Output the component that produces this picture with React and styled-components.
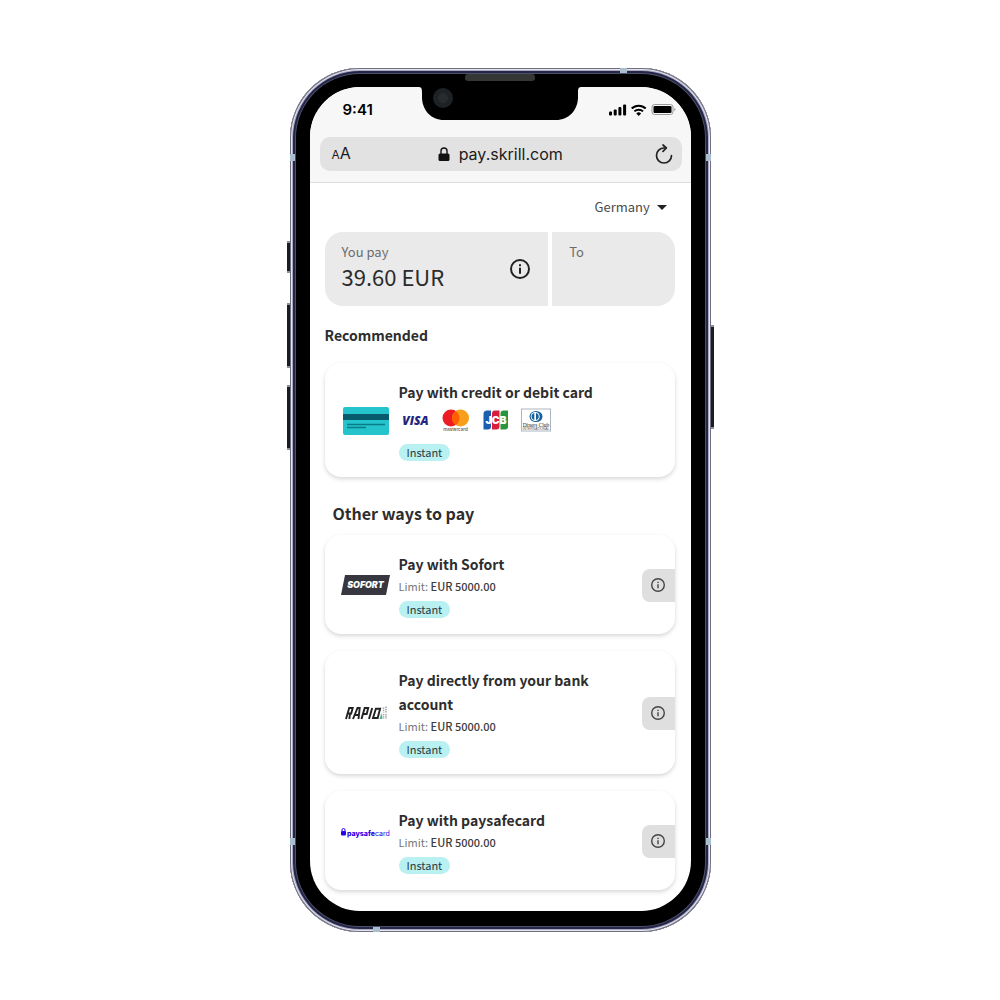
import React from "react";
import styled, { createGlobalStyle } from "styled-components";

const GlobalStyle = createGlobalStyle`
  *, *::before, *::after { box-sizing: border-box; }
  body {
    margin: 0;
    background: #fff;
    color: #2d2d2d;
    font-family: "Noto Sans CJK SC", "Open Sans", sans-serif;
  }
  button, input, select { font: inherit; color: inherit; margin: 0; }
  h1, h2, h3, p { margin: 0; }
`;

const Page = styled.main`
  min-height: 100vh;
  display: flex;
  justify-content: center;
  align-items: center;
`;

const Phone = styled.div`
  position: relative;
  width: 100%;
  max-width: 421px;
  padding: 19px 20px 21px;
  border-radius: 70px;
  background: #000;
  box-shadow:
    inset 0 0 0 1px #6f6f80,
    inset 0 0 0 2px #e4e4ee,
    inset 0 0 0 3px #a9a9bf,
    inset 0 0 0 5px #26264a,
    inset 0 0 0 6px #4b5068;
`;

const SideButton = styled.span`
  position: absolute;
  top: ${(p) => p.$top}px;
  ${(p) => p.$side}: -3px;
  width: 3px;
  height: ${(p) => p.$length}px;
  border: solid #8f8f9c;
  border-width: 2px 0;
  background: #1c1a26;
`;

const Antenna = styled.span`
  position: absolute;
  background: #a9bfd0;
  ${(p) => p.$edge}: 0;
  ${(p) => p.$from}: ${(p) => p.$offset}px;
  width: ${(p) => (p.$edge === "top" || p.$edge === "bottom" ? 7 : 5)}px;
  height: ${(p) => (p.$edge === "top" || p.$edge === "bottom" ? 5 : 7)}px;
`;

const Notch = styled.svg`
  position: absolute;
  top: 4px;
  left: 50%;
  width: 170px;
  height: 48px;
  margin-left: -85px;
`;

const Screen = styled.div`
  border-radius: 50px;
  overflow: hidden;
  background: #fff;
`;

const BrowserBar = styled.header`
  display: flex;
  flex-direction: column;
  gap: 15px;
  padding: 11px 9px 11px 10px;
  background: #f7f7f7;
  border-bottom: 1px solid #dedede;
`;

const StatusBar = styled.div`
  display: flex;
  justify-content: space-between;
  align-items: center;
  height: 24px;
  padding: 0 6px 0 23px;
  font: 600 15px/24px Inter, sans-serif;
  color: #000;
`;

const StatusIcons = styled.svg`
  width: 67px;
  height: 14px;
`;

const AddressBar = styled.div`
  display: flex;
  justify-content: space-between;
  align-items: center;
  height: 34px;
  padding: 0 8px 0 12px;
  border-radius: 10px;
  background: #e2e2e2;
  font-family: Inter, sans-serif;
  color: #1b1b1b;
`;

const BarButton = styled.button`
  display: flex;
  align-items: baseline;
  padding: 0;
  border: 0;
  background: none;
  font-size: 16px;
  line-height: 24px;
  small { font-size: 12px; }
`;

const Address = styled.label`
  display: flex;
  align-items: center;
  gap: 9px;
`;

const AddressInput = styled.input`
  width: 110px;
  padding: 0;
  border: 0;
  background: none;
  font-size: 16px;
  line-height: 24px;
`;

const Content = styled.div`
  padding: 12px 16px 21px 15px;
`;

const CountryRow = styled.div`
  display: flex;
  justify-content: flex-end;
  align-items: center;
  height: 24px;
  padding-right: 8px;
`;

const CountryField = styled.label`
  display: flex;
  align-items: center;
  gap: 6px;
`;

const CountrySelect = styled.select`
  appearance: none;
  padding: 0;
  border: 0;
  background: none;
  color: #4a4a4a;
  font-size: 13px;
  line-height: 20px;
`;

const Amounts = styled.div`
  display: grid;
  grid-template-columns: 223fr 122fr;
  gap: 4px;
  margin-top: 13px;
  border-radius: 18px;
  overflow: hidden;
`;

const AmountBox = styled.section`
  display: flex;
  justify-content: space-between;
  align-items: center;
  min-height: 74px;
  padding: 10px 18px 10px 17px;
  background: #eaeaea;
`;

const AmountText = styled.div`
  align-self: flex-start;
`;

const AmountLabel = styled.p`
  color: #6c6c6c;
  font-size: 13px;
  line-height: 20px;
`;

const AmountValue = styled.p`
  font-size: 22px;
  line-height: 28px;
  color: #2b2b2b;
`;

const IconButton = styled.button`
  display: flex;
  padding: 0;
  border: 0;
  background: none;
  color: #222;
`;

const SectionTitle = styled.h2`
  margin-top: ${(p) => p.$before}px;
  padding-left: ${(p) => p.$indent || 0}px;
  font-size: ${(p) => p.$size}px;
  line-height: 24px;
  font-weight: 700;
`;

const CardList = styled.div`
  display: flex;
  flex-direction: column;
  gap: 17px;
  margin-top: ${(p) => p.$before}px;
`;

const Card = styled.article`
  display: flex;
  align-items: center;
  gap: 8px;
  padding: 17px 0 16px 16px;
  border-radius: 16px;
  overflow: hidden;
  background: #fff;
  box-shadow: 0 2px 4px rgba(0, 0, 0, 0.16);
`;

const MethodLogo = styled.svg`
  flex: none;
  width: 50px;
  height: 30px;
`;

const CardBody = styled.div`
  flex: 1;
  min-width: 0;
`;

const CardTitle = styled.h3`
  font-size: 14px;
  line-height: 24px;
  font-weight: 700;
  a { color: inherit; text-decoration: none; }
`;

const Brands = styled.div`
  display: flex;
  gap: 8px;
  height: 24px;
  margin-top: 4px;
  svg { width: 32px; height: 24px; }
`;

const Limit = styled.p`
  color: #777;
  font-size: 11px;
  line-height: 20px;
  strong { color: #3c3c3c; font-weight: 500; }
`;

const Badge = styled.span`
  display: block;
  width: fit-content;
  margin-top: ${(p) => p.$before}px;
  padding: 0 8px;
  border-radius: 9px;
  background: #b9f0f2;
  font-size: 11px;
  line-height: 17px;
  color: #2a3a3c;
`;

const InfoTab = styled.button`
  flex: none;
  display: flex;
  align-items: center;
  justify-content: center;
  width: 33px;
  height: 33px;
  padding: 0;
  border: 0;
  border-radius: 8px 0 0 8px;
  background: #dfdfdf;
  color: #444;
`;

function InfoIcon({ size }) {
  return (
    <svg width={size} height={size} viewBox="0 0 20 20" fill="none" stroke="currentColor" strokeWidth="2" aria-hidden="true">
      <circle cx="10" cy="10" r="9" />
      <path d="M10 8.8v6" />
      <path d="M10 5.2v2" />
    </svg>
  );
}

function CardLogo() {
  return (
    <MethodLogo viewBox="0 0 50 30">
      <rect x="2" y="1" width="46" height="28" rx="2" fill="#25c3cb" />
      <path d="M2 8h46v6H2z" fill="#07596c" />
      <path d="M6 18.500h38M6 21.500h19" stroke="#087c89" strokeWidth="1.600" />
    </MethodLogo>
  );
}

function SofortLogo() {
  return (
    <MethodLogo viewBox="0 0 50 30">
      <path d="M4 5h45l-4 20H0z" fill="#37383f" />
      <text x="24.500" y="18.200" textAnchor="middle" fontFamily="Inter, sans-serif" fontWeight="900" fontStyle="italic" fontSize="8.800" fill="#fff">SOFORT</text>
    </MethodLogo>
  );
}

function RapidLogo() {
  return (
    <MethodLogo viewBox="0 0 50 30">
      <g fill="none" stroke="#222" strokeWidth="1.900">
        <path d="M5 21l3.200-11h3.500l-1.500 5.500H6.700M9 15.500l-.6 5.500" />
        <path d="M12 21l4.500-11h2.200L17.500 21M14 17h4" />
        <path d="M20.500 21l3.200-11h3.500l-1.500 6h-3.400" />
        <path d="M28 21l3.200-11" />
        <path d="M32 20l2.900-9.200h4.200L36.700 20z" />
      </g>
      <path d="M38.500 21l2-6 1 6z" fill="#4cb68a" />
      <path d="M42.500 9.500v5M45 8.500v6M42.500 16v5M45 16v5" stroke="#a5aca9" strokeWidth="1.600" strokeDasharray="1.500 .7" />
    </MethodLogo>
  );
}

function PaysafeLogo() {
  return (
    <MethodLogo viewBox="0 0 50 30">
      <rect x="0" y="5" width="5" height="4.500" rx="1" fill="#2a00e8" />
      <path d="M1 5V4a1.500 1.500 0 0 1 3 0v1" fill="none" stroke="#2a00e8" />
      <text x="6" y="9.800" fontFamily="Inter, sans-serif" fontSize="7" fill="#2a00e8">
        <tspan fontWeight="800">paysafe</tspan>
        <tspan fontWeight="400">card</tspan>
      </text>
    </MethodLogo>
  );
}

function BrandLogos() {
  return (
    <Brands>
      <svg viewBox="0 0 32 24" role="img" aria-label="Visa">
        <text x="16.500" y="16.500" textAnchor="middle" fontFamily="Open Sans, sans-serif" fontWeight="800" fontStyle="italic" fontSize="12" fill="#24257e">VISA</text>
      </svg>
      <svg viewBox="0 0 32 24" role="img" aria-label="Mastercard">
        <circle cx="12" cy="10" r="8.500" fill="#eb1c24" />
        <circle cx="21.500" cy="10" r="8.500" fill="#f79e1b" />
        <path d="M16.750 2.950a8.500 8.500 0 0 1 0 14.100a8.500 8.500 0 0 1 0-14.100" fill="#ff5f00" />
        <text x="16.500" y="22.500" textAnchor="middle" fontFamily="Inter, sans-serif" fontWeight="500" fontSize="4.500" fill="#555">mastercard</text>
      </svg>
      <svg viewBox="0 0 32 24" role="img" aria-label="JCB">
        <path d="M8 2.500h4v16a3 3 0 0 1-3 3H4.500V6A3.500 3.500 0 0 1 8 2.500z" fill="#1b5fae" />
        <path d="M16 2.500h4.500v16a3 3 0 0 1-3 3H13V5.500a3 3 0 0 1 3-3z" fill="#d91e3d" />
        <path d="M24.500 2.500H29v16a3 3 0 0 1-3 3h-4.500V5.500a3 3 0 0 1 3-3z" fill="#27963c" />
        <text x="17" y="15.800" textAnchor="middle" fontFamily="Inter, sans-serif" fontWeight="900" fontSize="10.500" fill="#fff">JCB</text>
      </svg>
      <svg viewBox="0 0 32 24" role="img" aria-label="Diners Club International">
        <rect x="2.500" y="1" width="29" height="22" fill="#fff" stroke="#aab6c2" />
        <ellipse cx="17" cy="8.500" rx="6.500" ry="5.500" fill="#17609c" />
        <circle cx="16.200" cy="8.500" r="4.500" fill="#fff" />
        <path d="M15.300 5a3.600 3.600 0 0 0 0 7zM17 5a3.600 3.600 0 0 1 0 7z" fill="#17609c" />
        <text x="17" y="18.800" textAnchor="middle" fontFamily="Liberation Serif, serif" fontSize="5.500" fill="#222">Diners Club</text>
        <text x="17" y="22" textAnchor="middle" fontFamily="Liberation Sans, sans-serif" fontSize="3.400" fill="#555">INTERNATIONAL</text>
      </svg>
    </Brands>
  );
}

const METHODS = [
  { title: "Pay with Sofort", Logo: SofortLogo },
  { title: "Pay directly from your bank account", Logo: RapidLogo },
  { title: "Pay with paysafecard", Logo: PaysafeLogo },
];

function MethodCard({ title, Logo }) {
  return (
    <Card>
      <Logo />
      <CardBody>
        <CardTitle><a href="#pay">{title}</a></CardTitle>
        <Limit>Limit: <strong>EUR 5000.00</strong></Limit>
        <Badge $before={5}>Instant</Badge>
      </CardBody>
      <InfoTab type="button" aria-label={title + " details"}><InfoIcon size={14} /></InfoTab>
    </Card>
  );
}

export default function App() {
  return (
    <Page>
      <GlobalStyle />
      <Phone>
        <SideButton $side="left" $top={173} $length={32} />
        <SideButton $side="left" $top={235} $length={65} />
        <SideButton $side="left" $top={317} $length={65} />
        <SideButton $side="right" $top={257} $length={104} />
        <Antenna $edge="top" $from="right" $offset={84} />
        <Antenna $edge="bottom" $from="left" $offset={83} />
        <Antenna $edge="left" $from="top" $offset={86} />
        <Antenna $edge="right" $from="top" $offset={86} />
        <Antenna $edge="left" $from="bottom" $offset={87} />
        <Antenna $edge="right" $from="bottom" $offset={87} />
        <Screen>
          <BrowserBar>
            <StatusBar>
              <time>9:41</time>
              <StatusIcons viewBox="0 0 67 14" aria-label="Signal, Wi-Fi and battery">
                <rect x="0" y="8.500" width="3" height="4" rx="1" />
                <rect x="4.700" y="6.500" width="3" height="6" rx="1" />
                <rect x="9.400" y="4" width="3" height="8.500" rx="1" />
                <rect x="14.100" y="1.500" width="3" height="11" rx="1" />
                <g fill="none" stroke="#000" strokeWidth="2">
                  <path d="M22.700 5.500a10 10 0 0 1 14 0" />
                  <path d="M25.400 8.400a6.200 6.200 0 0 1 8.600 0" />
                </g>
                <path d="M27.300 10.500a3.400 3.400 0 0 1 4.800 0L29.700 13z" />
                <rect x="43" y="1.500" width="21" height="10" rx="2.500" fill="none" stroke="#999" />
                <rect x="44.500" y="3" width="18" height="7" rx="1" />
                <path d="M65.300 5v3.200a1.700 1.700 0 0 0 0-3.200z" fill="#999" />
              </StatusIcons>
            </StatusBar>
            <AddressBar>
              <BarButton type="button" aria-label="Text size"><small>A</small>A</BarButton>
              <Address>
                <svg width="12" height="15" viewBox="0 0 12 15" aria-hidden="true">
                  <path d="M3 7V4a3 3 0 0 1 6 0v3" fill="none" stroke="#111" strokeWidth="1.400" />
                  <rect x="0.500" y="6.500" width="11" height="7.500" rx="1.500" fill="#111" />
                </svg>
                <AddressInput aria-label="Address" defaultValue="pay.skrill.com" />
              </Address>
              <BarButton type="button" aria-label="Reload">
                <svg width="18" height="20" viewBox="0 0 18 20" fill="none" stroke="#222" strokeWidth="1.700" strokeLinecap="round" strokeLinejoin="round">
                  <path d="M16.500 11.500A7.500 7.500 0 1 1 9 4h2" />
                  <path d="M8 1l3.300 3L8 7.300" />
                </svg>
              </BarButton>
            </AddressBar>
          </BrowserBar>
          <Content>
            <CountryRow>
              <CountryField>
                <CountrySelect aria-label="Country" defaultValue="Germany">
                  <option>Germany</option>
                </CountrySelect>
                <svg width="10" height="5" viewBox="0 0 10 5" aria-hidden="true">
                  <path d="M0 0h10L5 5z" fill="#222" />
                </svg>
              </CountryField>
            </CountryRow>
            <Amounts>
              <AmountBox>
                <AmountText>
                  <AmountLabel>You pay</AmountLabel>
                  <AmountValue>39.60 EUR</AmountValue>
                </AmountText>
                <IconButton type="button" aria-label="Amount details"><InfoIcon size={20} /></IconButton>
              </AmountBox>
              <AmountBox>
                <AmountText>
                  <AmountLabel>To</AmountLabel>
                </AmountText>
              </AmountBox>
            </Amounts>
            <SectionTitle $before={17} $size={14}>Recommended</SectionTitle>
            <CardList $before={16}>
              <Card>
                <CardLogo />
                <CardBody>
                  <CardTitle><a href="#card">Pay with credit or debit card</a></CardTitle>
                  <BrandLogos />
                  <Badge $before={12}>Instant</Badge>
                </CardBody>
              </Card>
            </CardList>
            <SectionTitle $before={24} $size={16} $indent={8}>Other ways to pay</SectionTitle>
            <CardList $before={10}>
              {METHODS.map((m) => <MethodCard key={m.title} {...m} />)}
            </CardList>
          </Content>
        </Screen>
        <Notch viewBox="0 0 170 48" aria-hidden="true">
          <path d="M3 15h1c3 0 3 3 3 6v4c0 13 9 23 22 23h112c13 0 22-10 22-23v-4c0-3 0-6 3-6V5H3z" fill="#000" />
          <rect x="50" y="2" width="70" height="7" rx="3" fill="#343736" />
          <circle cx="28" cy="26" r="10" fill="#1f2224" />
          <circle cx="28" cy="26" r="5" fill="#292c2f" />
        </Notch>
      </Phone>
    </Page>
  );
}
